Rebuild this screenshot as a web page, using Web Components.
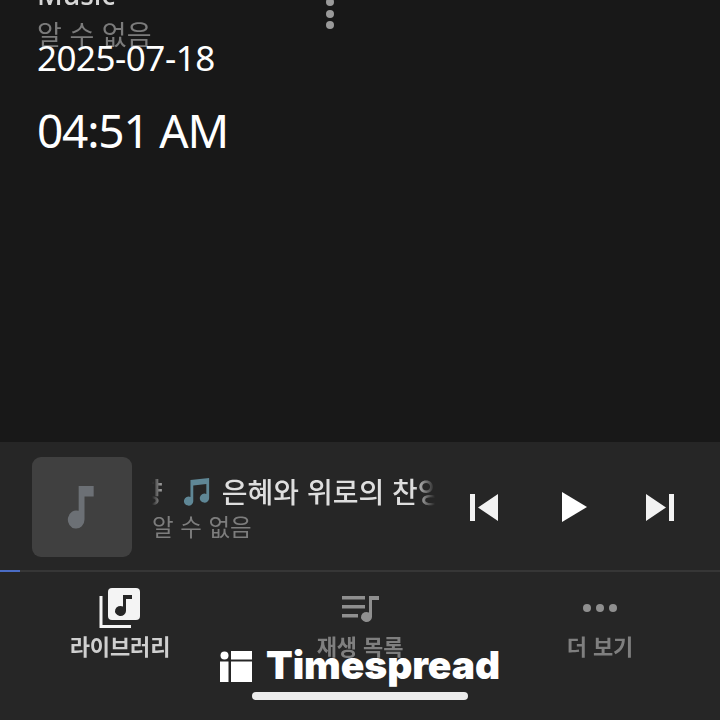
<!DOCTYPE html>
<html lang="ko">
<head>
<meta charset="utf-8">
<title>Music player</title>
<style>
  html, body { margin: 0; height: 100%; background: #181818; }
  body { font-family: "Noto Sans", "Noto Sans CJK KR", sans-serif; overflow: hidden; }
  .app { position: relative; display: flex; flex-direction: column; width: 720px; height: 720px; overflow: hidden; }
</style>
</head>
<body>
<div class="app">
  <track-list></track-list>
  <mini-player></mini-player>
  <bottom-nav></bottom-nav>
  <date-stamp date="2025-07-18" time="04:51 AM"></date-stamp>
  <brand-mark></brand-mark>
  <home-bar></home-bar>
</div>
<script>
class TrackList extends HTMLElement {
  constructor() {
    super();
    this.attachShadow({ mode: 'open' }).innerHTML = `
      <style>
        :host { display: block; height: 442px; flex: none; overflow: hidden; background: #181818; }
        .row { display: flex; justify-content: space-between; margin-top: -20px; padding: 0 386px 0 37px; filter: blur(.7px); }
        .name { color: #d6d6d6; font: 500 28px/28px "Noto Sans", "Noto Sans CJK KR", sans-serif; }
        .sub { color: #7b7b7b; font: 400 27px/36px "Noto Sans CJK KR", sans-serif; margin-top: 8px; }
        .menu { display: flex; flex-direction: column; gap: 3.500px; margin-top: 18px; }
        .menu i { width: 8px; height: 8px; border-radius: 50%; background: #9a9a9a; }
      </style>
      <div class="row">
        <div>
          <div class="name">Music</div>
          <div class="sub">알 수 없음</div>
        </div>
        <div class="menu"><i></i><i></i><i></i></div>
      </div>`;
  }
}

class MiniPlayer extends HTMLElement {
  constructor() {
    super();
    this.attachShadow({ mode: 'open' }).innerHTML = `
      <style>
        :host { display: block; flex: none; height: 130px; background: #262626; }
        .body { display: flex; align-items: center; height: 128px; padding: 2px 32px 0; box-sizing: border-box; filter: blur(.6px); }
        .art { flex: none; display: grid; place-items: center; width: 100px; height: 100px; border-radius: 9px; background: #404040; }
        .info { flex: none; width: 283px; margin-left: 20px; overflow: hidden; }
        .title {
          display: flex; align-items: center; white-space: nowrap; height: 38px; color: #dedede;
          font: 500 28px/38px "Noto Sans CJK KR", sans-serif;
          -webkit-mask-image: linear-gradient(90deg, transparent 0, #000 14px, #000 262px, transparent 283px);
          mask-image: linear-gradient(90deg, transparent 0, #000 14px, #000 262px, transparent 283px);
        }
        .title .scroll { display: flex; align-items: center; margin-left: -15px; }
        .title svg { margin: 0 11px 0 20px; flex: none; }
        .artist { color: #7d7d7d; font: 400 23.500px/32px "Noto Sans CJK KR", sans-serif; margin-top: 0; }
        .controls { display: flex; align-items: center; margin-left: 35px; }
        .controls svg { display: block; flex: none; }
        .controls .play { margin: 0 59px 0 64px; }
        .bar { height: 2px; background: #363636; }
        .bar i { display: block; width: 20px; height: 2px; background: #4a6cc4; }
      </style>
      <div class="body">
        <div class="art">
          <svg width="30" height="44" viewBox="0 0 36 46" preserveAspectRatio="none"><path fill="#6c7075" d="M14 1h18v11H21v24a10 9.500 0 1 1-7-9z"/></svg>
        </div>
        <div class="info">
          <div class="title"><span class="scroll">향<svg width="28" height="30" viewBox="0 0 30 30" preserveAspectRatio="none"><path fill="#5f8796" d="M8 4l20-2v20a5 4.500 0 1 1-3-4V8L11 9.500V25a5 4.500 0 1 1-3-4z"/></svg>은혜와 위로의 찬양</span></div>
          <div class="artist">알 수 없음</div>
        </div>
        <div class="controls">
          <svg width="28" height="27" viewBox="0 0 28 27"><path fill="#f2f2f2" d="M0 0h5v27H0zM28 0v27L8 13.500z"/></svg>
          <svg class="play" width="25" height="30" viewBox="0 0 25 30"><path fill="#fff" d="M0 0l25 15L0 30z"/></svg>
          <svg width="28" height="27" viewBox="0 0 28 27"><path fill="#f2f2f2" d="M23 0h5v27h-5zM0 0v27l20-13.500z"/></svg>
        </div>
      </div>
      <div class="bar"><i></i></div>`;
  }
}

class NavItem extends HTMLElement {
  constructor() {
    super();
    this.attachShadow({ mode: 'open' }).innerHTML = `
      <style>
        :host { display: flex; flex: 1; flex-direction: column; align-items: center; color: #7f7f7f; filter: blur(.6px); }
        :host([active]) { color: #cfcfcf; }
        .icon { display: flex; align-items: center; justify-content: center; height: 44px; margin-top: 14px; }
        .label { font: 700 22px/30px "Noto Sans CJK KR", sans-serif; letter-spacing: -.1px; }
      </style>
      <div class="icon"><slot name="icon"></slot></div>
      <div class="label"><slot></slot></div>`;
  }
}

class BottomNav extends HTMLElement {
  constructor() {
    super();
    this.attachShadow({ mode: 'open' }).innerHTML = `
      <style>
        :host { display: flex; flex: 1; background: #262626; }
      </style>
      <nav-item active>
        <svg slot="icon" width="42" height="42" viewBox="0 0 42 42">
          <path fill="none" stroke="#f4f4f4" stroke-width="3" d="M2 9v30.500h30"/>
          <rect x="9" y="1" width="32" height="32" rx="4" fill="#f4f4f4"/>
          <path fill="#262626" d="M24 8h9v4h-6v12a5.500 5 0 1 1-3-4.500z"/>
        </svg>
        라이브러리
      </nav-item>
      <nav-item>
        <svg slot="icon" width="40" height="30" viewBox="0 0 40 30">
          <path fill="#8f8f8f" d="M2 3h23v3.500H2zM2 12h23v3.500H2zM2 21h16v3.500H2z"/>
          <path fill="#8f8f8f" d="M29 3h10v4h-7v17a5.500 5 0 1 1-3-4.500z"/>
        </svg>
        재생 목록
      </nav-item>
      <nav-item>
        <svg slot="icon" width="34" height="8" viewBox="0 0 34 8">
          <circle cx="4" cy="4" r="4" fill="#8f8f8f"/><circle cx="17" cy="4" r="4" fill="#8f8f8f"/><circle cx="30" cy="4" r="4" fill="#8f8f8f"/>
        </svg>
        더 보기
      </nav-item>`;
  }
}

class DateStamp extends HTMLElement {
  constructor() {
    super();
    this.attachShadow({ mode: 'open' }).innerHTML = `
      <style>
        :host { position: absolute; left: 37px; top: 35px; color: #fff; font-family: "Noto Sans", sans-serif; }
        .date { font-size: 35px; line-height: 46px; letter-spacing: -.5px; }
        .time { font-size: 46px; line-height: 62px; letter-spacing: -1.200px; margin-top: 18px; }
      </style>
      <div class="date"></div>
      <div class="time"></div>`;
    this.shadowRoot.querySelector('.date').textContent = this.getAttribute('date');
    this.shadowRoot.querySelector('.time').textContent = this.getAttribute('time');
  }
}

class BrandMark extends HTMLElement {
  constructor() {
    super();
    this.attachShadow({ mode: 'open' }).innerHTML = `
      <style>
        :host { position: absolute; left: 220px; top: 643px; display: flex; align-items: center; gap: 14px; height: 44px; color: #fff; }
        svg { display: block; margin-top: 3px; }
        span { font: 900 39px/44px Inter, sans-serif; letter-spacing: -.1px; }
      </style>
      <svg width="32" height="32" viewBox="0 0 32 32" fill="#fff">
        <circle cx="4.500" cy="4.500" r="4"/><path d="M0 10.500h8.500V31H0zM11 0h21v8.500H11zM11 10.500h21V31H11z"/>
      </svg>
      <span>Timespread</span>`;
  }
}

class HomeBar extends HTMLElement {
  constructor() {
    super();
    this.attachShadow({ mode: 'open' }).innerHTML = `
      <style>
        :host { position: absolute; left: 252px; top: 692px; width: 216px; height: 8px; border-radius: 4px; background: #ececec; }
      </style>`;
  }
}

customElements.define('track-list', TrackList);
customElements.define('mini-player', MiniPlayer);
customElements.define('nav-item', NavItem);
customElements.define('bottom-nav', BottomNav);
customElements.define('date-stamp', DateStamp);
customElements.define('brand-mark', BrandMark);
customElements.define('home-bar', HomeBar);
</script>
</body>
</html>
